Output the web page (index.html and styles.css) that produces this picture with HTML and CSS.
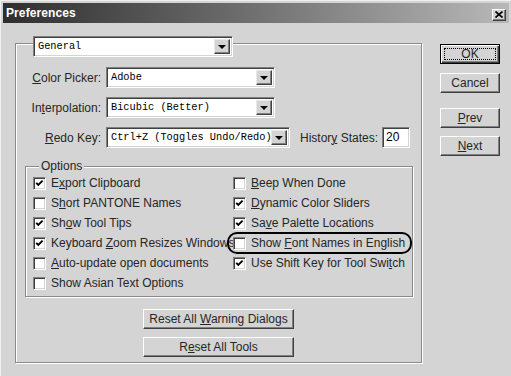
FILE: index.html
```html
<!DOCTYPE html>
<html lang="en">
<head>
    <meta charset="UTF-8">
    <title>Preferences</title>
    <link rel="stylesheet" href="styles.css">
</head>
<body>
    <div class="window">
        <div class="titlebar">
            <span class="title">Preferences</span>
            <span class="close-btn">
                <svg width="8" height="7" viewBox="0 0 8 7"><path d="M0.5 0.5 L7.5 6.5 M7.5 0.5 L0.5 6.5" stroke="#000" stroke-width="1.6"/></svg>
            </span>
        </div>

        <div class="dialog-body">
            <div class="main-group">
                <div class="select select-general">
                    <span class="select-text">General</span>
                    <span class="select-arrow"><span class="tri"></span></span>
                </div>

                <div class="row row-first">
                    <label class="field-label"><u>C</u>olor Picker:</label>
                    <div class="select select-mid">
                        <span class="select-text">Adobe</span>
                        <span class="select-arrow"><span class="tri"></span></span>
                    </div>
                </div>
                <div class="row">
                    <label class="field-label">In<u>t</u>erpolation:</label>
                    <div class="select select-mid">
                        <span class="select-text">Bicubic (Better)</span>
                        <span class="select-arrow"><span class="tri"></span></span>
                    </div>
                </div>
                <div class="row">
                    <label class="field-label"><u>R</u>edo Key:</label>
                    <div class="select select-wide">
                        <span class="select-text">Ctrl+Z (Toggles Undo/Redo)</span>
                        <span class="select-arrow"><span class="tri"></span></span>
                    </div>
                    <label class="history-label">Histor<u>y</u> States:</label>
                    <div class="text-input">20</div>
                </div>

                <div class="options">
                    <span class="legend">Options</span>
                    <div class="checks">
                        <div class="check"><span class="box on"></span><span>E<u>x</u>port Clipboard</span></div>
                        <div class="check"><span class="box"></span><span><u>B</u>eep When Done</span></div>

                        <div class="check"><span class="box"></span><span>S<u>h</u>ort PANTONE Names</span></div>
                        <div class="check"><span class="box on"></span><span><u>D</u>ynamic Color Sliders</span></div>

                        <div class="check"><span class="box on"></span><span>Sh<u>o</u>w Tool Tips</span></div>
                        <div class="check"><span class="box on"></span><span>Sa<u>v</u>e Palette Locations</span></div>

                        <div class="check"><span class="box on"></span><span>Keyboard <u>Z</u>oom Resizes Windows</span></div>
                        <div class="check circled"><span class="box"></span><span>Show <u>F</u>ont Names in English</span><span class="ring"></span></div>

                        <div class="check"><span class="box"></span><span><u>A</u>uto-update open documents</span></div>
                        <div class="check"><span class="box on"></span><span>Use Shift Key for Tool Swi<u>t</u>ch</span></div>

                        <div class="check"><span class="box"></span><span>Show Asian Text Options</span></div>
                    </div>
                </div>

                <div class="reset-buttons">
                    <div class="btn reset-btn"><span>Reset All <u>W</u>arning Dialogs</span></div>
                    <div class="btn reset-btn"><span>R<u>e</u>set All Tools</span></div>
                </div>
            </div>

            <div class="side-buttons">
                <div class="btn btn-default"><span class="focus">OK</span></div>
                <div class="btn btn-cancel">Cancel</div>
                <div class="btn btn-prev"><span><u>P</u>rev</span></div>
                <div class="btn btn-next"><span><u>N</u>ext</span></div>
            </div>
        </div>
    </div>
</body>
</html>
```

FILE: styles.css
```css
body {
    margin: 0;
    padding: 0;
    background: #d4d4d4;
    font-family: "Liberation Sans", Arial, sans-serif;
    font-size: 12px;
    color: #262626;
}

u {
    text-decoration-thickness: 1px;
    text-underline-offset: 1px;
}

.window {
    width: 511px;
    height: 376px;
    box-sizing: border-box;
    padding: 2px 2px 0 2px;
    background: #d4d4d4;
    border-left: 1px solid #f0f0f0;
    border-top: 1px solid #f0f0f0;
    overflow: hidden;
}

/* title bar */
.titlebar {
    height: 20px;
    display: flex;
    align-items: center;
    justify-content: space-between;
    padding: 0 3px 0 3px;
    background: linear-gradient(to right, #2e2e2e 0%, #6a6a6a 45%, #b8b8b8 100%);
}

.title {
    color: #fff;
    font-weight: bold;
    font-size: 12px;
    letter-spacing: 0.1px;
}

.close-btn {
    width: 14px;
    height: 12px;
    box-sizing: border-box;
    display: flex;
    align-items: center;
    justify-content: center;
    background: #d4d4d4;
    border: 1px solid;
    border-color: #fff #404040 #404040 #fff;
    box-shadow: inset -1px -1px #808080;
    margin-top: 3px;
}

.dialog-body {
    display: flex;
    padding: 20px 0 0 12px;
}

/* etched group boxes */
.main-group {
    width: 407px;
    height: 320px;
    box-sizing: border-box;
    border: 1px solid #8a8a8a;
    box-shadow: inset 1px 1px #fff, 1px 1px #fff;
}

.options {
    position: relative;
    margin: 18px 0 0 9px;
    width: 388px;
    height: 131px;
    box-sizing: border-box;
    border: 1px solid #8a8a8a;
    box-shadow: inset 1px 1px #fff, 1px 1px #fff;
}

.legend {
    position: absolute;
    top: -8px;
    left: 13px;
    padding: 0 2px;
    background: #d4d4d4;
    line-height: 14px;
}

/* dropdowns */
.select {
    height: 21px;
    box-sizing: border-box;
    display: flex;
    align-items: stretch;
    background: #fff;
    border: 1px solid;
    border-color: #808080 #fff #fff #808080;
    box-shadow: inset 1px 1px #404040, inset -1px -1px #d4d4d4;
    padding: 2px;
}

.select-text {
    flex: 1;
    font-family: "Liberation Mono", "Courier New", monospace;
    font-size: 10.3px;
    line-height: 15px;
    padding-left: 2px;
    color: #000;
    white-space: nowrap;
    overflow: hidden;
}

.select-arrow {
    width: 16px;
    box-sizing: border-box;
    display: flex;
    align-items: center;
    justify-content: center;
    background: #d4d4d4;
    border: 1px solid;
    border-color: #e8e8e8 #404040 #404040 #e8e8e8;
    box-shadow: inset -1px -1px #808080;
}

.tri {
    width: 0;
    height: 0;
    border-left: 4px solid transparent;
    border-right: 4px solid transparent;
    border-top: 4px solid #000;
    margin-top: 1px;
}

.select-general {
    width: 200px;
    margin: -8px 0 0 17px;
}

.select-mid {
    width: 169px;
}

.select-wide {
    width: 184px;
}

.row {
    display: flex;
    align-items: center;
    margin-top: 9px;
}

.row-first {
    margin-top: 10px;
}

.field-label {
    width: 85px;
    text-align: right;
    margin-right: 5px;
}

.history-label {
    margin-left: 10px;
    margin-right: 4px;
}

.text-input {
    width: 28px;
    height: 21px;
    box-sizing: border-box;
    background: #fff;
    border: 1px solid;
    border-color: #808080 #fff #fff #808080;
    box-shadow: inset 1px 1px #404040, inset -1px -1px #d4d4d4;
    padding: 2px 0 0 3px;
    line-height: 15px;
    color: #000;
}

/* checkboxes */
.checks {
    display: grid;
    grid-template-columns: 200px 1fr;
    grid-auto-rows: 20px;
    padding: 6px 0 0 7px;
}

.check {
    display: flex;
    align-items: center;
    white-space: nowrap;
}

.box {
    width: 13px;
    height: 13px;
    box-sizing: border-box;
    margin-right: 5px;
    background: #fff;
    border: 1px solid;
    border-color: #808080 #fff #fff #808080;
    box-shadow: inset 1px 1px #404040, inset -1px -1px #d4d4d4;
    flex-shrink: 0;
}

.box.on {
    background: #fff url("data:image/svg+xml;utf8,<svg xmlns='http://www.w3.org/2000/svg' width='11' height='11' viewBox='0 0 11 11'><polyline points='2.2,4.8 4.3,7 8.6,2.6' fill='none' stroke='black' stroke-width='1.9'/></svg>") no-repeat center;
}

.circled {
    position: relative;
}

.ring {
    position: absolute;
    left: -6px;
    top: -1px;
    width: 185px;
    height: 22px;
    box-sizing: border-box;
    border: 2px solid #000;
    border-radius: 10px;
}

/* buttons */
.btn {
    box-sizing: border-box;
    height: 20px;
    display: flex;
    align-items: center;
    justify-content: center;
    background: #d4d4d4;
    border: 1px solid;
    border-color: #fff #404040 #404040 #fff;
    box-shadow: inset -1px -1px #808080;
    color: #262626;
    white-space: nowrap;
}

.reset-buttons {
    display: flex;
    flex-direction: column;
    align-items: center;
    gap: 8px;
    margin-top: 12px;
}

.reset-btn {
    width: 151px;
}

.side-buttons {
    display: flex;
    flex-direction: column;
    margin-left: 18px;
    width: 60px;
}

.side-buttons .btn {
    width: 60px;
}

.btn-default {
    margin-top: 1px;
    border: 1px solid #000;
    box-shadow: inset 1px 1px #fff, inset -1px -1px #404040, inset -2px -2px #808080;
    padding: 3px;
}

.focus {
    flex: 1;
    align-self: stretch;
    display: flex;
    align-items: center;
    justify-content: center;
    border: 1px dotted #000;
}

.btn-cancel {
    margin-top: 9px;
}

.btn-prev {
    margin-top: 15px;
}

.btn-next {
    margin-top: 8px;
}
```
